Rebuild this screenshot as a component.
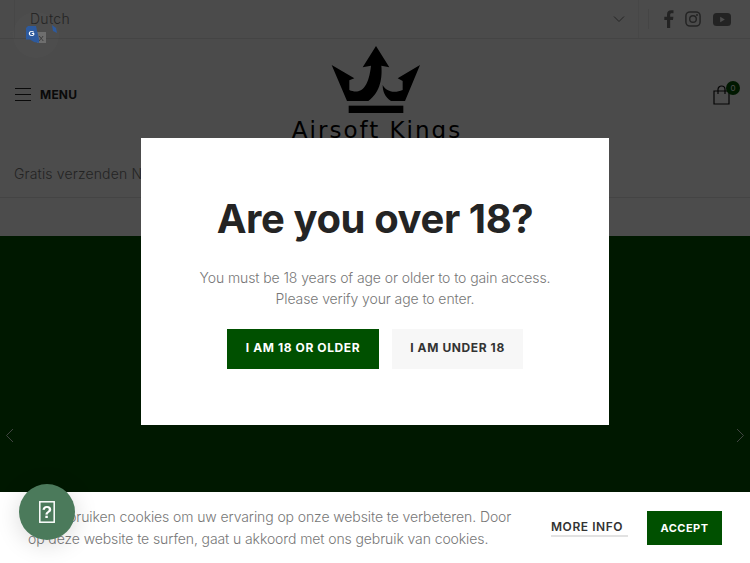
<div class="page">
  <div class="topbar">
    <div class="search">
      <span class="lang">Dutch</span>
      <svg class="chev" width="12" height="8" viewBox="0 0 12 8"><path d="M1 1.500 6 6.500 11 1.500" fill="none" stroke="#777" stroke-width="1"/></svg>
    </div>
    <div class="socials">
      <span class="divider"></span>
      <svg width="11" height="18" viewBox="0 0 11 18"><path d="M3 18V10H.3V6.800H3V4.400C3 1.600 4.700.2 7.100.2c1.100 0 2.100.1 2.400.1v2.900H7.800C6.500 3.200 6.200 3.900 6.200 4.800v2h3.200l-.4 3.200H6.200v8z" fill="#777"/></svg>
      <svg width="16" height="16" viewBox="0 0 16 16"><rect x=".9" y=".9" width="14.200" height="14.200" rx="4" fill="none" stroke="#777" stroke-width="1.500"/><circle cx="8" cy="8" r="3.300" fill="none" stroke="#777" stroke-width="1.400"/><circle cx="12" cy="4" r="1" fill="#777"/></svg>
      <svg width="18" height="13" viewBox="0 0 18 13"><rect width="18" height="13" rx="3.500" fill="#777"/><path d="M7.200 3.800v5.400L11.800 6.500z" fill="#fff"/></svg>
    </div>
  </div>

  <header class="header">
    <div class="menu">
      <span class="burger"><i></i><i></i><i></i></span>
      <span class="menu-label">MENU</span>
    </div>
    <div class="logo">
      <svg width="90" height="68" viewBox="0 0 270 204">
        <g transform="translate(-150 -33)">
          <path d="M285 33 325 97 301 92C304 125 300 170 262 198H198L152 90 220 130 205 136 205 165C235 178 262 165 270 92L245 97z" fill="#000"/>
          <path d="M417 90 372 198H330C312 186 305 170 305 150 312 165 335 178 365 165V138L350 130z" fill="#000"/>
          <rect x="203" y="212" width="164" height="22" fill="#000"/>
        </g>
      </svg>
      <span class="logo-text">Airsoft Kings</span>
    </div>
    <div class="cart">
      <svg width="20" height="20" viewBox="0 0 20 20"><path d="M3 6h15v13H3z M7 9V4.500a3.500 3.500 0 0 1 7 0V9" fill="none" stroke="#111" stroke-width="1.200"/></svg>
      <span class="badge">0</span>
    </div>
  </header>

  <div class="notice">Gratis verzenden NL</div>
  <div class="strip"></div>

  <section class="hero">
    <svg class="arrow left" width="9" height="15" viewBox="0 0 9 15"><path d="M8 1 1.500 7.500 8 14" fill="none" stroke="#fff" stroke-width="1"/></svg>
    <svg class="arrow right" width="9" height="15" viewBox="0 0 9 15"><path d="M1 1l6.500 6.500L1 14" fill="none" stroke="#fff" stroke-width="1"/></svg>
  </section>
</div>

<div class="overlay">
  <div class="modal">
    <h2>Are you over 18?</h2>
    <p>You must be 18 years of age or older to to gain access.<br />Please verify your age to enter.</p>
    <div class="actions">
      <button class="btn primary">I am 18 or older</button>
      <button class="btn secondary">I am under 18</button>
    </div>
  </div>
</div>

<div class="translate">
  <svg width="46" height="46" viewBox="0 0 46 46">
    <circle cx="23" cy="23" r="23" fill="#fff" fill-opacity=".015"/>
    <path d="M24 20h9v11h-9z" fill="#6e6e6e"/>
    <text x="25.500" y="29" class="x">X</text>
    <path d="M15 14h8l3 13v4l-5-1-4-2.500h-4V16z" fill="#2d5a9e"/>
    <text x="15.500" y="24" class="g">G</text>
    <path d="M39 13l4 3 1 5-4-2z" fill="#2d5a9e"/>
  </svg>
</div>

<div class="cookies">
  <p>Wij gebruiken cookies om uw ervaring op onze website te verbeteren. Door<br />op deze website te surfen, gaat u akkoord met ons gebruik van cookies.</p>
  <a class="more" href="#more">More info</a>
  <button class="accept">Accept</button>
</div>

<div class="help">
  <svg width="16" height="22" viewBox="0 0 16 22">
    <rect x=".8" y=".8" width="14.400" height="20.400" fill="none" stroke="#fff" stroke-width="1.500"/>
    <text x="8" y="17" class="q">?</text>
  </svg>
</div>

<style>
  :global(body) {
    margin: 0;
    overflow: hidden;
    background: #fff;
    font-family: Inter, "Liberation Sans", sans-serif;
  }
  .page {
    height: 563px;
    display: flex;
    flex-direction: column;
    overflow: hidden;
    position: relative;
  }
  .topbar {
    height: 39px;
    flex: none;
    box-sizing: border-box;
    display: flex;
    align-items: stretch;
    padding-left: 14px;
    border-bottom: 1px solid #e5e5e5;
    background: #fbfbfb;
  }
  .search {
    width: 625px;
    box-sizing: border-box;
    display: flex;
    align-items: center;
    justify-content: space-between;
    padding: 0 13px 0 15px;
    border-left: 1px solid #eee;
    border-right: 1px solid #eee;
  }
  .lang { font-size: 14px; font-weight: 300; color: #777; letter-spacing: .3px; padding-bottom: 2px; }
  .socials {
    display: flex;
    align-items: center;
    margin-left: 9px;
  }
  .divider { width: 1px; height: 20px; background: #e8e8e8; margin-right: 15px; }
  .socials svg { margin-right: 10px; }
  .socials svg:nth-of-type(2) { margin-right: 12px; }
  .translate { position: fixed; left: 13px; top: 12px; }
  .x { font: 8px "Liberation Sans", sans-serif; fill: #333; }
  .g { font: bold 8px "Liberation Sans", sans-serif; fill: #fff; }
  .header {
    height: 111px;
    flex: none;
    display: flex;
    align-items: center;
    justify-content: space-between;
    padding: 0 19px 0 15px;
    position: relative;
    background: #fbfbfb;
  }
  .menu { display: flex; align-items: center; gap: 9px; }
  .burger { display: flex; flex-direction: column; gap: 4.500px; width: 16px; }
  .burger i { display: block; height: 1.500px; background: #222; }
  .menu-label { font-size: 12px; font-weight: 700; color: #222; letter-spacing: .2px; }
  .logo {
    position: absolute;
    left: 292px;
    top: 7px;
    width: 170px;
    display: flex;
    flex-direction: column;
    align-items: center;
  }
  .logo svg { display: block; margin-left: -2px; }
  .logo-text {
    font: 400 23px/26px "DejaVu Sans", sans-serif;
    color: #000;
    white-space: nowrap;
    margin-top: 3px;
    letter-spacing: 2px;
  }
  .cart { position: relative; width: 20px; height: 20px; }
  .cart svg { display: block; }
  .badge {
    position: absolute;
    left: 15px;
    top: -4px;
    width: 14px;
    height: 14px;
    border-radius: 50%;
    background: #005000;
    color: #fff;
    font-size: 8px;
    line-height: 14px;
    text-align: center;
  }
  .notice {
    height: 48px;
    flex: none;
    box-sizing: border-box;
    padding-left: 14px;
    display: flex;
    align-items: center;
    font-size: 14px;
    font-weight: 300;
    color: #777;
    letter-spacing: .15px;
    border-bottom: 1px solid #e5e5e5;
  }
  .strip { height: 38px; flex: none; }
  .hero { flex: 1; background: #005000; position: relative; }
  .arrow { position: absolute; top: 192px; opacity: .85; }
  .arrow.left { left: 5px; }
  .arrow.right { right: 5px; }
  .overlay {
    position: fixed;
    inset: 0;
    background: rgba(0, 0, 0, .7);
    display: flex;
    align-items: center;
    justify-content: center;
  }
  .modal {
    width: 468px;
    height: 287px;
    box-sizing: border-box;
    background: #fff;
    padding-top: 57px;
    text-align: center;
  }
  h2 {
    margin: 0 0 24px;
    font-size: 40px;
    line-height: 48px;
    font-weight: 700;
    letter-spacing: -.4px;
    color: #242424;
  }
  .modal p {
    margin: 0 0 20px;
    font-size: 14px;
    line-height: 21px;
    font-weight: 300;
    letter-spacing: -.1px;
    color: #777;
  }
  .actions { display: flex; justify-content: center; gap: 13px; }
  .btn {
    height: 40px;
    border: 0;
    padding: 0 0 3px;
    font-family: inherit;
    font-size: 12px;
    font-weight: 700;
    letter-spacing: .6px;
    text-transform: uppercase;
  }
  .primary { width: 152px; background: #005000; color: #fff; }
  .secondary { width: 131px; background: #f7f7f7; color: #333; }
  .cookies {
    position: fixed;
    left: 0;
    right: 0;
    bottom: 0;
    height: 71px;
    box-sizing: border-box;
    background: #fff;
    display: flex;
    align-items: center;
    padding: 0 28px;
  }
  .cookies p {
    width: 490px;
    margin: 0;
    font-size: 14px;
    line-height: 22px;
    font-weight: 300;
    letter-spacing: -.1px;
    color: #777;
    white-space: nowrap;
  }
  .more {
    margin-left: 33px;
    width: 77px;
    box-sizing: border-box;
    font-size: 12px;
    font-weight: 600;
    line-height: 16px;
    color: #333;
    text-decoration: none;
    text-transform: uppercase;
    letter-spacing: .55px;
    border-bottom: 2px solid #e2e2e2;
    padding-top: 1px;
    white-space: nowrap;
  }
  .accept {
    margin-left: 19px;
    width: 75px;
    height: 34px;
    border: 0;
    padding: 0;
    background: #005000;
    color: #fff;
    font-family: inherit;
    font-size: 11px;
    font-weight: 700;
    letter-spacing: .45px;
    text-transform: uppercase;
  }
  .help {
    position: fixed;
    left: 19px;
    top: 484px;
    width: 56px;
    height: 56px;
    border-radius: 50%;
    background: #4b7a5b;
    box-shadow: 0 4px 24px rgba(0, 0, 0, .15);
    display: flex;
    align-items: center;
    justify-content: center;
  }
  .help svg { display: block; }
  .q { font: 700 17px "Liberation Sans", sans-serif; fill: #fff; text-anchor: middle; }
</style>
